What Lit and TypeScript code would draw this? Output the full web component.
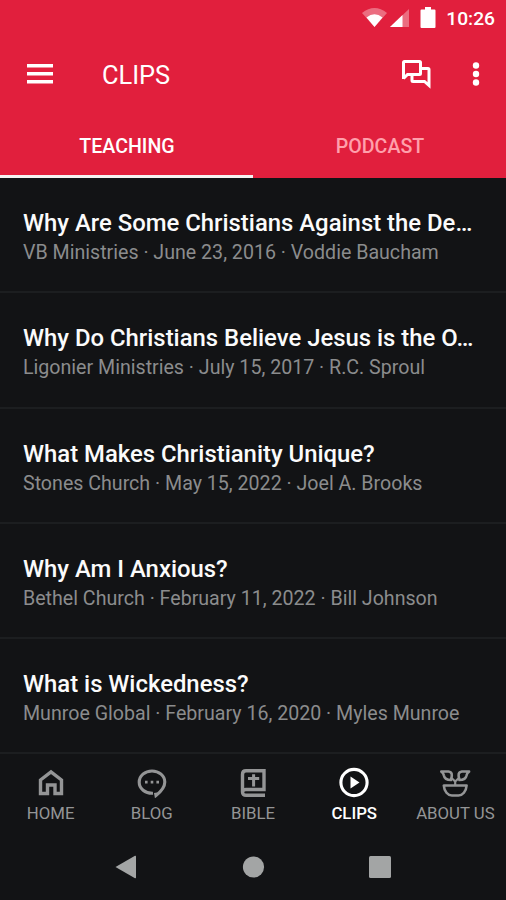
import { LitElement, html, css, svg } from "lit";
import { customElement, property } from "lit/decorators.js";
import { classMap } from "lit/directives/class-map.js";

const clips = [
  { title: "Why Are Some Christians Against the De…", meta: "VB Ministries · June 23, 2016 · Voddie Baucham" },
  { title: "Why Do Christians Believe Jesus is the O…", meta: "Ligonier Ministries · July 15, 2017 · R.C. Sproul" },
  { title: "What Makes Christianity Unique?", meta: "Stones Church · May 15, 2022 · Joel A. Brooks" },
  { title: "Why Am I Anxious?", meta: "Bethel Church · February 11, 2022 · Bill Johnson" },
  { title: "What is Wickedness?", meta: "Munroe Global · February 16, 2020 · Myles Munroe" },
];

const navIcons: Record<string, unknown> = {
  HOME: svg`<path d="M5.5 27.5V14L16 5.8L26.5 14V27.5H20V19H12.5V27.5Z" stroke-width="3.4"/>`,
  BLOG: svg`<path d="M17 27.2C9 27.5 3.2 22.5 3.2 16.2C3.2 9.7 9 5 16 5S28.8 9.7 28.8 16C28.8 21.5 24.5 26 20 29.5L19.5 26.8"/><path d="M9 14.8h2.6v2.6H9zM14.7 14.8h2.6v2.6h-2.6zM20.4 14.8H23v2.6h-2.6z" fill="currentColor" stroke="none"/>`,
  BIBLE: svg`<path d="M28 29.3H9Q5.5 29.3 5.5 26V8.5Q5.5 4.8 9 4.8H27V23.5H9Q5.5 23.5 5.5 26.5" stroke-width="3.4"/><path d="M16.6 8.3V20.5M11 12.6H22.2" stroke-width="3"/>`,
  CLIPS: svg`<circle cx="16" cy="16.5" r="13.1"/><path d="M12.5 10.5V22.5L21.5 16.5Z" fill="currentColor" stroke="none"/>`,
  "ABOUT US": svg`<g stroke-width="2.6" stroke-linejoin="round"><path d="M4.8 19.5H27.6C27.2 25.5 23.5 29.5 19.5 29.5H12.9C8.9 29.5 5.2 25.5 4.8 19.5Z"/><path d="M16.2 19V15.5L12 11.5M16.2 15.5L20.4 11.5" stroke-width="2.2"/><path d="M2.3 5.5Q4.6 6.8 4.9 9.5Q5.7 14 12 14Q14.6 6.2 9.5 5.5Z"/><path d="M30.1 5.5Q27.8 6.8 27.5 9.5Q26.7 14 20.4 14Q17.8 6.2 22.9 5.5Z"/></g>`,
};

@customElement("clip-row")
class ClipRow extends LitElement {
  @property() heading = "";
  @property() meta = "";
  static styles = css`
    :host { display: block; box-sizing: border-box; height: 115.3px; padding: 30px 0 0 23px; border-bottom: 2px solid #1c1e20; }
    .heading { font-size: 23.88px; font-weight: 500; line-height: 30px; color: #fbfbfb; white-space: nowrap; }
    .meta { font-size: 19.63px; line-height: 29px; color: #8b8c8d; white-space: nowrap; }
  `;
  render() {
    return html`<div class="heading">${this.heading}</div><div class="meta">${this.meta}</div>`;
  }
}

@customElement("nav-item")
class NavItem extends LitElement {
  @property() label = "";
  @property({ type: Boolean }) active = false;
  static styles = css`
    :host { display: block; flex: 1; min-width: 0; }
    .item { display: flex; flex-direction: column; align-items: center; color: #949596; }
    .active { color: #fff; }
    svg { width: 32px; height: 32px; display: block; fill: none; stroke: currentColor; stroke-width: 3.1; }
    .label { font-size: 16.8px; line-height: 22px; margin-top: 4px; white-space: nowrap; }
    .active .label { font-weight: 500; }
  `;
  render() {
    return html`<div class=${classMap({ item: true, active: this.active })}>
      <svg viewBox="0 0 32 32">${navIcons[this.label]}</svg>
      <div class="label">${this.label}</div>
    </div>`;
  }
}

@customElement("app-root")
class AppRoot extends LitElement {
  static styles = css`
    :host { display: flex; flex-direction: column; height: 900px; width: 506px; overflow: hidden; background: #121315; font-family: Roboto, "Noto Sans", sans-serif; }
    svg { display: block; }
    header { background: #e11f3d; color: #fff; height: 178px; flex: none; display: flex; flex-direction: column; }
    .status { height: 36px; display: flex; justify-content: flex-end; padding-right: 11px; box-sizing: border-box; }
    .status svg { width: 76px; height: 36px; margin-right: 8px; }
    .time { font-size: 19.2px; font-weight: 500; line-height: 38px; }
    .bar { height: 78px; display: flex; align-items: center; padding: 0 20px 2px 26.5px; box-sizing: border-box; }
    .menu { width: 26.5px; height: 20px; }
    .title { margin-left: 49px; flex: 1; font-size: 25.4px; line-height: 30px; padding-top: 2px; }
    .chat { width: 30px; height: 30px; margin-right: 35px; }
    .more { width: 20px; height: 30px; }
    .tabs { flex: 1; display: grid; grid-template-columns: 1fr 1fr; font-size: 19.6px; font-weight: 500; text-align: center; line-height: 66px; }
    .tab { box-sizing: border-box; color: #ffa0ac; border-bottom: 3px solid transparent; height: 64px; padding-left: 1px; }
    .selected { color: #fff; border-color: #f5f3f2; }
    .list { flex: none; height: 576.5px; }
    nav { display: flex; height: 80px; padding-top: 11px; box-sizing: border-box; }
    .system { flex: 1; display: flex; justify-content: space-between; padding: 20px 114px 0; }
    .system svg { width: 24px; height: 24px; fill: #a3a5a5; }
  `;
  render() {
    return html`
      <header>
        <div class="status">
          <svg viewBox="0 0 76 36" fill="#fff">
            <path d="M0 13Q12.5 3 25 13L12.5 27Z" opacity=".35"/><path d="M4.5 17.5Q12.5 11 20.5 17.5L12.5 27Z"/>
            <path d="M28 27L47 9V27Z" opacity=".35"/><path d="M28 27L40.5 15V27Z"/>
            <path d="M63 7h6v2.5h3.5q1 0 1 1V27q0 1-1 1h-13q-1 0-1-1V10.5q0-1 1-1H63Z"/>
          </svg>
          <span class="time">10:26</span>
        </div>
        <div class="bar">
          <svg class="menu" viewBox="0 0 26 20" preserveAspectRatio="none" fill="#fff"><path d="M0 0h26v3.5H0zM0 8h26v3.5H0zM0 16h26v3.5H0z"/></svg>
          <div class="title">CLIPS</div>
          <svg class="chat" viewBox="0 0 30 30" fill="none" stroke="#fff" stroke-width="3"><path d="M2.5 20V3.5Q2.5 2.5 3.5 2.5H18.5Q19.5 2.5 19.5 3.5V14.5Q19.5 15.5 18.5 15.5H6.5L2.5 19.5M19.5 9.5H27Q28 9.5 28 10.5V26.5L23.5 22.5H12Q11 22.5 11 21.5V15.5"/></svg>
          <svg class="more" viewBox="0 0 20 30" fill="#fff"><circle cx="10" cy="6.5" r="3.2"/><circle cx="10" cy="15" r="3.2"/><circle cx="10" cy="23.5" r="3.2"/></svg>
        </div>
        <div class="tabs"><div class="tab selected">TEACHING</div><div class="tab">PODCAST</div></div>
      </header>
      <div class="list">${clips.map((c) => html`<clip-row .heading=${c.title} .meta=${c.meta}></clip-row>`)}</div>
      <nav>${Object.keys(navIcons).map((n) => html`<nav-item .label=${n} ?active=${n === "CLIPS"}></nav-item>`)}</nav>
      <div class="system">
        <svg viewBox="0 0 24 24"><path d="M1.5 12L21 .8Q22 .5 22 1.5V22.5Q22 23.5 21 23.2Z"/></svg>
        <svg viewBox="0 0 24 24"><circle cx="12.5" cy="12" r="10.6"/></svg>
        <svg viewBox="0 0 24 24"><rect x="1" y="1" width="22" height="22" rx="1.5"/></svg>
      </div>`;
  }
}
